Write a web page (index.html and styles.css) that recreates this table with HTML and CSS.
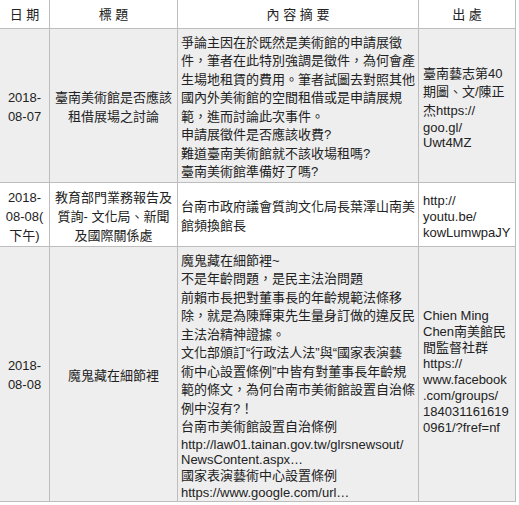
FILE: index.html
```html
<!DOCTYPE html>
<html lang="zh-Hant">
<head>
<meta charset="utf-8">
<title>日期 標題 內容摘要 出處</title>
<link rel="stylesheet" href="styles.css">
</head>
<body>
<table class="log">
  <colgroup>
    <col class="c-date">
    <col class="c-title">
    <col class="c-body">
    <col class="c-src">
  </colgroup>
  <thead>
    <tr>
      <th>日 期</th>
      <th>標 題</th>
      <th>內 容 摘 要</th>
      <th>出 處</th>
    </tr>
  </thead>
  <tbody>
    <tr class="alt">
      <td class="date">2018-<br>08-07</td>
      <td class="title">臺南美術館是否應該租借展場之討論</td>
      <td class="body">爭論主因在於既然是美術館的申請展徵件，筆者在此特別強調是徵件，為何會產生場地租賃的費用。筆者試圖去對照其他國內外美術館的空間租借或是申請展規範，進而討論此次事件。<br>申請展徵件是否應該收費?<br>難道臺南美術館就不該收場租嗎?<br>臺南美術館準備好了嗎?</td>
      <td class="src">臺南藝志第40<br>期圖、文/陳正<br>杰https://<span class="latin">goo.gl/<br>Uwt4MZ</span></td>
    </tr>
    <tr class="mid">
      <td class="date">2018-<br>08-08(<br>下午)</td>
      <td class="title">教育部門業務報告及質詢- 文化局、新聞及國際關係處</td>
      <td class="body">台南市政府議會質詢文化局長葉澤山南美館頻換館長</td>
      <td class="src tight">http://<br>youtu.be/<br>kowLumwpaJY</td>
    </tr>
    <tr class="alt">
      <td class="date">2018-<br>08-08</td>
      <td class="title">魔鬼藏在細節裡</td>
      <td class="body">魔鬼藏在細節裡~<br>不是年齡問題，是民主法治問題<br>前賴市長把對董事長的年齡規範法條移除，就是為陳輝東先生量身訂做的違反民主法治精神證據。<br>文化部頒訂“行政法人法”與“國家表演藝<br>術中心設置條例”中皆有對董事長年齡規範的條文，為何台南市美術館設置自治條例中沒有?！<br>台南市美術館設置自治條例<span class="latin">http://law01.tainan.gov.tw/glrsnewsout/<wbr>NewsContent.aspx…</span>國家表演藝術中心設置條例<span class="latin">https://www.google.com/url…</span></td>
      <td class="src tight raised">Chien Ming<br>Chen南美館民<br>間監督社群<br>https://<br>www.facebook<br>.com/groups/<br>184031161619<br>0961/?fref=nf</td>
    </tr>
  </tbody>
</table>
</body>
</html>
```

FILE: styles.css
```css
body {
  margin: 0;
  background: #ffffff;
}

.log {
  border-collapse: collapse;
  table-layout: fixed;
  width: 516px;
  font-family: "Liberation Sans", "Noto Sans CJK TC", sans-serif;
  font-size: 13px;
  color: #222222;
  border: 1px solid #bdbdbd;
  border-top-style: hidden;
  border-left-style: hidden;
}

.c-date { width: 49.5px; }
.c-title { width: 128px; }
.c-body { width: 241px; }
.c-src { width: 97px; }

.log th,
.log td {
  border: 1px solid #bdbdbd;
  padding: 5px 4px 0.5px;
  line-height: 18.5px;
  vertical-align: middle;
  font-weight: normal;
}

.log th {
  padding: 6px 4px 3px;
  text-align: center;
}

.log tr.alt td {
  background: #eeeeee;
}

.date,
.title {
  text-align: center;
}

.log tr.mid td.date,
.log tr.mid td.title {
  line-height: 19px;
}

.log td.body {
  text-align: left;
  padding-left: 3px;
  padding-right: 2px;
}

.log td.src {
  text-align: left;
  padding-left: 4px;
  padding-right: 4px;
  white-space: nowrap;
}

.log td.tight {
  line-height: 16px;
}

.log td.raised {
  padding-bottom: 8.5px;
}

.latin {
  display: block;
  line-height: 15px;
}
```
